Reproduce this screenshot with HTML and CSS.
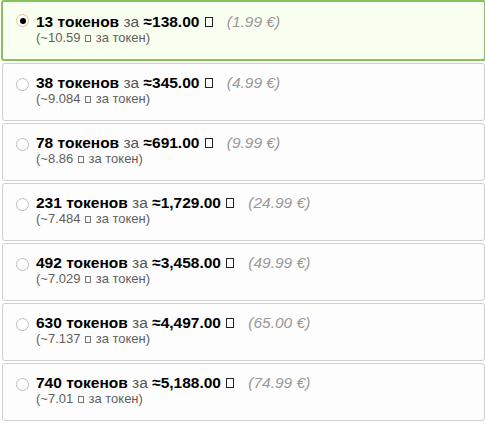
FILE: index.html
```html
<!DOCTYPE html>
<html>
<head>
<meta charset="utf-8">
<link rel="stylesheet" href="styles.css">
</head>
<body>
<div class="list">
  <label class="opt selected">
    <span class="radio"><span class="dot"></span></span>
    <span class="info">
      <span class="main"><b>13 токенов</b> <span class="za">за</span> <b>≈138.00</b> <span class="tofu"></span><i class="eur">(1.99 €)</i></span>
      <span class="sub">(~10.59 <span class="tofu small"></span> за токен)</span>
    </span>
  </label>
  <label class="opt">
    <span class="radio"></span>
    <span class="info">
      <span class="main"><b>38 токенов</b> <span class="za">за</span> <b>≈345.00</b> <span class="tofu"></span><i class="eur">(4.99 €)</i></span>
      <span class="sub">(~9.084 <span class="tofu small"></span> за токен)</span>
    </span>
  </label>
  <label class="opt">
    <span class="radio"></span>
    <span class="info">
      <span class="main"><b>78 токенов</b> <span class="za">за</span> <b>≈691.00</b> <span class="tofu"></span><i class="eur">(9.99 €)</i></span>
      <span class="sub">(~8.86 <span class="tofu small"></span> за токен)</span>
    </span>
  </label>
  <label class="opt">
    <span class="radio"></span>
    <span class="info">
      <span class="main"><b>231 токенов</b> <span class="za">за</span> <b>≈1,729.00</b> <span class="tofu"></span><i class="eur">(24.99 €)</i></span>
      <span class="sub">(~7.484 <span class="tofu small"></span> за токен)</span>
    </span>
  </label>
  <label class="opt">
    <span class="radio"></span>
    <span class="info">
      <span class="main"><b>492 токенов</b> <span class="za">за</span> <b>≈3,458.00</b> <span class="tofu"></span><i class="eur">(49.99 €)</i></span>
      <span class="sub">(~7.029 <span class="tofu small"></span> за токен)</span>
    </span>
  </label>
  <label class="opt">
    <span class="radio"></span>
    <span class="info">
      <span class="main"><b>630 токенов</b> <span class="za">за</span> <b>≈4,497.00</b> <span class="tofu"></span><i class="eur">(65.00 €)</i></span>
      <span class="sub">(~7.137 <span class="tofu small"></span> за токен)</span>
    </span>
  </label>
  <label class="opt">
    <span class="radio"></span>
    <span class="info">
      <span class="main"><b>740 токенов</b> <span class="za">за</span> <b>≈5,188.00</b> <span class="tofu"></span><i class="eur">(74.99 €)</i></span>
      <span class="sub">(~7.01 <span class="tofu small"></span> за токен)</span>
    </span>
  </label>
</div>
</body>
</html>
```
FILE: styles.css
```css
html, body {
  margin: 0;
  padding: 0;
  background: #ffffff;
}
body {
  font-family: "Liberation Sans", Arial, sans-serif;
  width: 485px;
  overflow: hidden;
}
.list {
  display: flex;
  flex-direction: column;
  gap: 2px;
  padding-left: 2px;
  width: 483px;
}
.opt {
  display: flex;
  align-items: flex-start;
  box-sizing: border-box;
  height: 58px;
  border: 1px solid #cfcfcf;
  border-radius: 3px;
  background: #fdfdfd;
  padding: 10px 0 0 13px;
}
.opt.selected {
  height: 61px;
  margin: 0 -1px;
  border: 2px solid #86c25b;
  background: #f8fff1;
  padding: 11px 0 0 13px;
}
.radio {
  box-sizing: border-box;
  width: 13px;
  height: 13px;
  border: 1px solid #bdbdbd;
  border-radius: 50%;
  background: #fff;
  margin-top: 4px;
  display: flex;
  align-items: center;
  justify-content: center;
  flex: none;
}
.selected .radio {
  border-color: #dcc28f;
  margin-top: 1px;
}
.dot {
  width: 6px;
  height: 6px;
  border-radius: 50%;
  background: #000;
}
.info {
  display: flex;
  flex-direction: column;
  margin-left: 7px;
}
.main {
  font-size: 15.5px;
  line-height: 17px;
  color: #000;
  white-space: nowrap;
}
.main b {
  font-weight: bold;
}
.za {
  color: #555;
}
.eur {
  color: #999;
  margin-left: 13px;
}
.tofu {
  display: inline-block;
  box-sizing: border-box;
  width: 8px;
  height: 10px;
  margin: 0 1px;
  border: 1px solid #222;
  vertical-align: 0;
}
.tofu.small {
  width: 6px;
  height: 7px;
  margin: 0 1px;
  border-color: #777;
  vertical-align: 0;
}
.sub {
  font-size: 13px;
  line-height: 15px;
  color: #5f5f5f;
  white-space: nowrap;
}
```
